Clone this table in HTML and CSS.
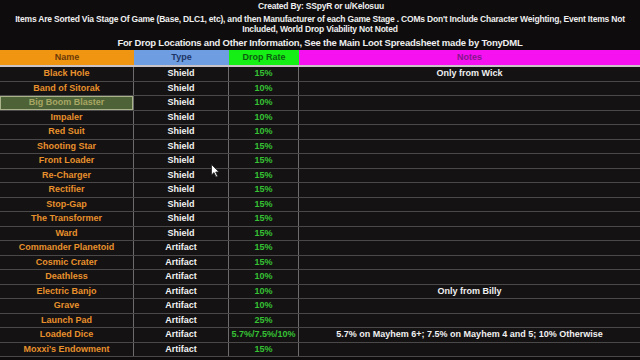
FILE: index.html
```html
<!DOCTYPE html>
<html>
<head>
<meta charset="utf-8">
<link rel="stylesheet" href="styles.css">
</head>
<body>
<div class="page">
  <div class="intro">
    <div class="credit">Created By: SSpyR or u/Kelosuu</div>
    <div class="sorted">Items Are Sorted Via Stage Of Game (Base, DLC1, etc), and then Manufacturer of each Game Stage . COMs Don't Include Character Weighting, Event Items Not<br>Included, World Drop Viability Not Noted</div>
    <div class="see">For Drop Locations and Other Information, See the Main Loot Spreadsheet made by TonyDML</div>
  </div>
  <div class="table">
    <div class="row head">
      <div class="cell h-name">Name</div>
      <div class="cell h-type">Type</div>
      <div class="cell h-rate">Drop Rate</div>
      <div class="cell h-notes">Notes</div>
    </div>
    <div class="row"><div class="cell name">Black Hole</div><div class="cell type">Shield</div><div class="cell rate">15%</div><div class="cell notes">Only from Wick</div></div>
    <div class="row"><div class="cell name">Band of Sitorak</div><div class="cell type">Shield</div><div class="cell rate">10%</div><div class="cell notes"></div></div>
    <div class="row"><div class="cell name selected">Big Boom Blaster</div><div class="cell type">Shield</div><div class="cell rate">10%</div><div class="cell notes"></div></div>
    <div class="row"><div class="cell name">Impaler</div><div class="cell type">Shield</div><div class="cell rate">10%</div><div class="cell notes"></div></div>
    <div class="row"><div class="cell name">Red Suit</div><div class="cell type">Shield</div><div class="cell rate">10%</div><div class="cell notes"></div></div>
    <div class="row"><div class="cell name">Shooting Star</div><div class="cell type">Shield</div><div class="cell rate">15%</div><div class="cell notes"></div></div>
    <div class="row"><div class="cell name">Front Loader</div><div class="cell type">Shield</div><div class="cell rate">15%</div><div class="cell notes"></div></div>
    <div class="row"><div class="cell name">Re-Charger</div><div class="cell type">Shield</div><div class="cell rate">15%</div><div class="cell notes"></div></div>
    <div class="row"><div class="cell name">Rectifier</div><div class="cell type">Shield</div><div class="cell rate">15%</div><div class="cell notes"></div></div>
    <div class="row"><div class="cell name">Stop-Gap</div><div class="cell type">Shield</div><div class="cell rate">15%</div><div class="cell notes"></div></div>
    <div class="row"><div class="cell name">The Transformer</div><div class="cell type">Shield</div><div class="cell rate">15%</div><div class="cell notes"></div></div>
    <div class="row"><div class="cell name">Ward</div><div class="cell type">Shield</div><div class="cell rate">15%</div><div class="cell notes"></div></div>
    <div class="row"><div class="cell name">Commander Planetoid</div><div class="cell type">Artifact</div><div class="cell rate">15%</div><div class="cell notes"></div></div>
    <div class="row"><div class="cell name">Cosmic Crater</div><div class="cell type">Artifact</div><div class="cell rate">15%</div><div class="cell notes"></div></div>
    <div class="row"><div class="cell name">Deathless</div><div class="cell type">Artifact</div><div class="cell rate">10%</div><div class="cell notes"></div></div>
    <div class="row"><div class="cell name">Electric Banjo</div><div class="cell type">Artifact</div><div class="cell rate">10%</div><div class="cell notes">Only from Billy</div></div>
    <div class="row"><div class="cell name">Grave</div><div class="cell type">Artifact</div><div class="cell rate">10%</div><div class="cell notes"></div></div>
    <div class="row"><div class="cell name">Launch Pad</div><div class="cell type">Artifact</div><div class="cell rate">25%</div><div class="cell notes"></div></div>
    <div class="row"><div class="cell name">Loaded Dice</div><div class="cell type">Artifact</div><div class="cell rate">5.7%/7.5%/10%</div><div class="cell notes">5.7% on Mayhem 6+; 7.5% on Mayhem 4 and 5; 10% Otherwise</div></div>
    <div class="row"><div class="cell name">Moxxi's Endowment</div><div class="cell type">Artifact</div><div class="cell rate">15%</div><div class="cell notes"></div></div>
  </div>
  <svg class="cursor" width="9" height="14" viewBox="0 0 9 14"><path d="M0.5 0.5 L0.5 11 L3 8.6 L5 13 L6.6 12.3 L4.7 8 L8 8 Z" fill="#fff" stroke="#222" stroke-width="0.8"/></svg>
</div>
</body>
</html>
```
FILE: styles.css
```css
html, body {
  margin: 0;
  padding: 0;
  background: #0e0c0d;
}
.page {
  position: relative;
  width: 640px;
  height: 360px;
  overflow: hidden;
  font-family: "Liberation Sans", Arial, sans-serif;
  font-weight: bold;
  font-size: 9px;
  color: #efefef;
}
.intro {
  display: flex;
  flex-direction: column;
  align-items: center;
  text-align: center;
  height: 50px;
  white-space: nowrap;
}
.credit {
  line-height: 12px;
  padding-left: 2px;
  font-size: 8.5px;
  letter-spacing: -0.2px;
}
.sorted {
  margin-top: 2px;
  line-height: 10px;
  font-size: 8.5px;
  letter-spacing: -0.2px;
}
.see {
  margin-top: 3px;
  line-height: 12px;
  font-size: 9.5px;
  letter-spacing: -0.2px;
}
.table {
  display: flex;
  flex-direction: column;
}
.row {
  display: grid;
  grid-template-columns: 134px 95px 70px 1fr;
  height: 14.5px;
  box-sizing: border-box;
  border-bottom: 1px solid #4b4849;
  background: #141213;
}
.row.head {
  height: 17px;
  border-bottom: 2px solid #c9c2c6;
}
.cell {
  display: flex;
  align-items: center;
  justify-content: center;
  white-space: nowrap;
  border-right: 1px solid #6e6b6c;
  line-height: 13px;
}
.cell.notes, .head .cell {
  border-right: none;
}
.h-name { background: #ef9512; color: #6b3a08; }
.h-type { background: #6f9de2; color: #1c3566; }
.h-rate { background: #16ef16; color: #0c5c10; }
.h-notes { background: #f511f0; color: #86158c; }
.name { color: #e8912c; }
.type { color: #f2f2f2; }
.rate { color: #36c234; }
.notes { color: #f0f0f0; }
.name.selected {
  background: #4d6236;
  color: #a9a764;
  box-shadow: inset 0 0 0 1px #aab38a;
}
.cursor {
  position: absolute;
  left: 211px;
  top: 164px;
}
```
